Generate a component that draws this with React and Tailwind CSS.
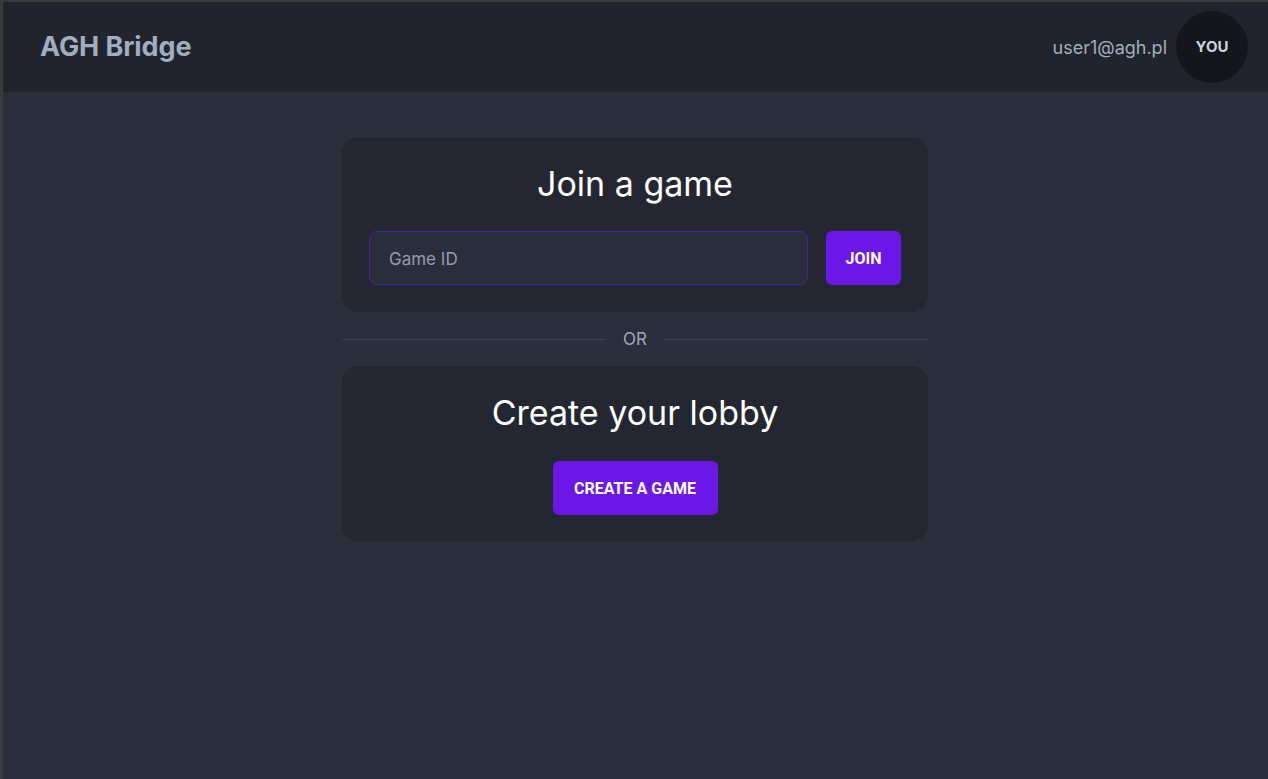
export default function App() {
  return (
    <div className="min-h-[779px] h-screen flex flex-col bg-[#2a2f3b] border-l-[3px] border-t-[2px] border-[#3a3a3a] font-['Inter',sans-serif]">
      {/* Top bar */}
      <header className="h-[90px] flex-shrink-0 bg-[#21242c] flex items-center justify-between pl-[37px] pr-[20px]">
        <h1 className="text-[27px] font-bold text-[#a0aec0] tracking-[-0.1px]">AGH Bridge</h1>
        <div className="flex items-center gap-[9px]">
          <span className="text-[18px] text-[#a0aec0]">user1@agh.pl</span>
          <div className="w-[72px] h-[72px] rounded-full bg-[#15161b] flex items-center justify-center text-[15px] font-bold text-[#cbd5e0]">
            YOU
          </div>
        </div>
      </header>

      {/* Main */}
      <main className="flex-1 flex justify-center">
        <div className="w-[586px] mt-[45px] ml-[-1px]">
          <section className="bg-[#242731] rounded-[16px] p-[27px] flex flex-col gap-[27px]">
            <h2 className="text-[34px] leading-[40px] text-white text-center">Join a game</h2>
            <div className="flex gap-[18px]">
              <input
                placeholder="Game ID"
                className="flex-1 h-[54px] rounded-[8px] bg-[#2a2e3a] border border-[#4b2499] px-[19px] pt-[1px] text-[17px] text-white placeholder:text-[#939cae] outline-none"
              />
              <button className="w-[75px] h-[54px] pt-[1px] rounded-[6px] bg-[#6a17e8] text-white text-[16px] font-bold font-['Roboto',sans-serif]">
                JOIN
              </button>
            </div>
          </section>

          <div className="flex items-center gap-[18px] my-[15px]">
            <div className="flex-1 h-px bg-[#3d4250]" />
            <span className="text-[17px] leading-[24px] text-[#a0a8b8]">OR</span>
            <div className="flex-1 h-px bg-[#3d4250]" />
          </div>

          <section className="bg-[#242731] rounded-[16px] p-[27px] pb-[26px] flex flex-col items-center gap-[28px]">
            <h2 className="text-[34px] leading-[40px] text-white text-center">Create your lobby</h2>
            <button className="w-[165px] h-[54px] pt-[1px] rounded-[6px] bg-[#6a17e8] text-white text-[16px] font-bold font-['Roboto',sans-serif]">
              CREATE A GAME
            </button>
          </section>
        </div>
      </main>
    </div>
  );
}
